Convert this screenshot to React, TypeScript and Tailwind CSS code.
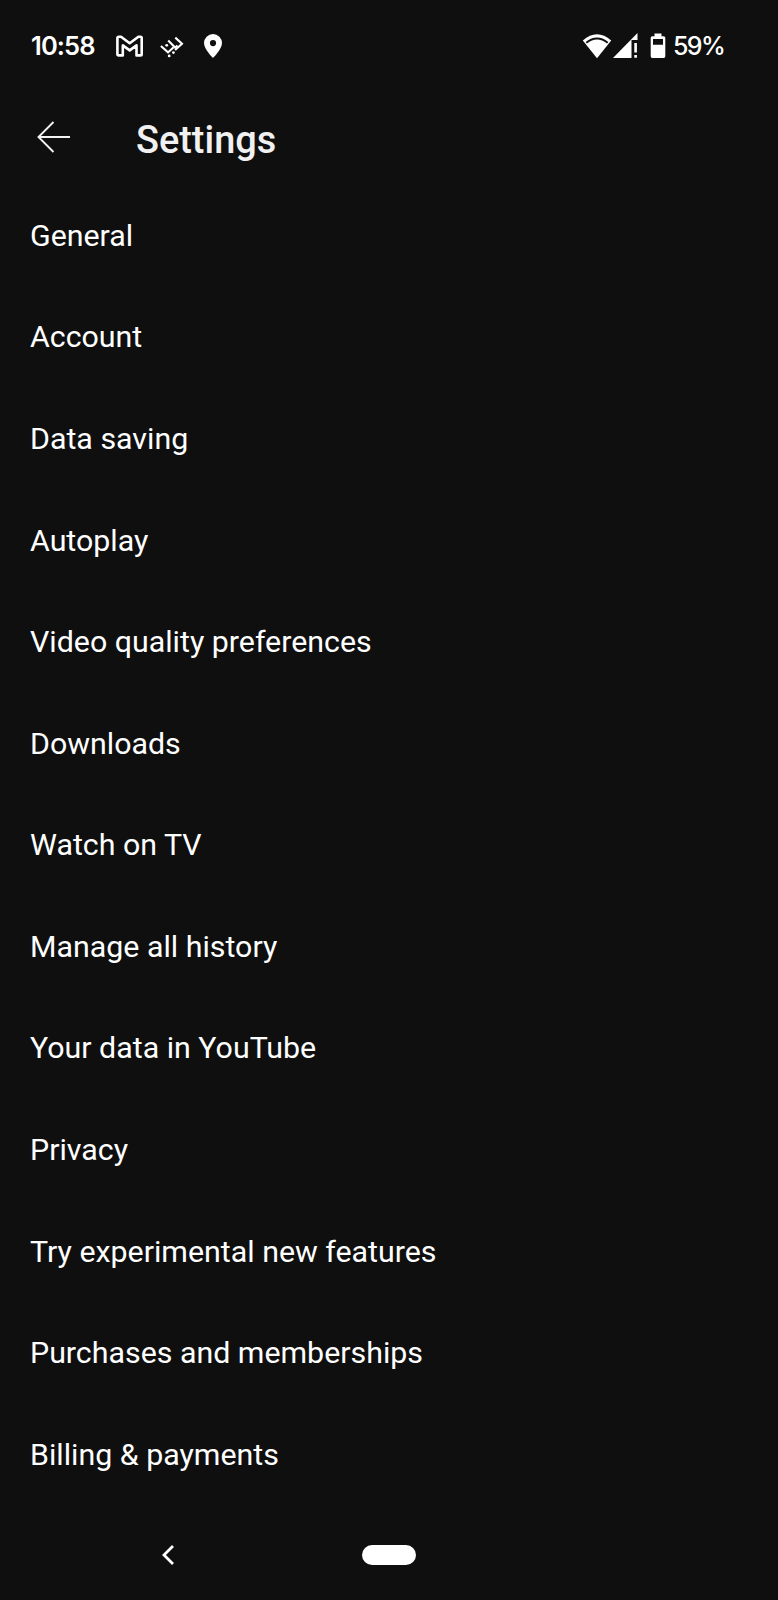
const items = [
  'General',
  'Account',
  'Data saving',
  'Autoplay',
  'Video quality preferences',
  'Downloads',
  'Watch on TV',
  'Manage all history',
  'Your data in YouTube',
  'Privacy',
  'Try experimental new features',
  'Purchases and memberships',
  'Billing & payments',
];

const MailIcon = () => (
  <svg width="28" height="24" viewBox="0 0 28 24" fill="none" stroke="currentColor" strokeWidth="2.6" strokeLinejoin="round">
    <path d="M3.8 2.8h2.2L14.7 9.2l8.7-6.4h2q1.3 0 1.3 1.4v16q0 1.2-1.2 1.2h-4V11.4l-6.8 5-6.9-5v10H3.6q-1.2 0-1.2-1.2v-16q0-1.4 1.4-1.4z" />
  </svg>
);

const ChevronsIcon = () => (
  <svg width="24" height="24" viewBox="0 0 24 24" fill="none" stroke="currentColor" strokeWidth="2.1">
    <path d="M.9 12 8 18.4l5.6-5.2" />
    <path d="m8.2 6.4 6.9 7.2 2.4-2.2" />
    <path d="M15.3 3.6 22 9.7l-6.9 6.4" />
    <g fill="currentColor" stroke="none">
      <circle cx="6.7" cy="11.3" r="1.4" />
      <circle cx="13.4" cy="18.6" r="1.4" />
      <circle cx="9.2" cy="21.9" r="1.4" />
    </g>
  </svg>
);

const PinIcon = () => (
  <svg width="18" height="24" viewBox="0 0 18 24" fill="currentColor" fillRule="evenodd">
    <path d="M9 0a9 9 0 0 0-9 9c0 6.2 9 15 9 15s9-8.8 9-15a9 9 0 0 0-9-9zm0 6a3.1 3.1 0 1 1 0 6.2A3.1 3.1 0 0 1 9 6z" />
  </svg>
);

const WifiIcon = () => (
  <svg width="30" height="26" viewBox="0 0 30 26">
    <path d="M.8 7.6Q15-5 29.2 7.6L15 25.2z" fill="currentColor" />
    <path d="M4.3 9.7Q15 1.5 25.7 9.7" fill="none" stroke="#0f0f0f" strokeWidth="1.9" />
  </svg>
);

const SignalIcon = () => (
  <svg width="25" height="26" viewBox="0 0 25 26" fill="currentColor">
    <path d="M24.5 0v7h-6v18H0z" />
    <path d="M21.3 10h2.6v9.5h-2.6zM21.3 22h2.6v2.8h-2.6z" />
  </svg>
);

const BatteryIcon = () => (
  <svg width="16" height="26" viewBox="0 0 16 26" fill="currentColor" fillRule="evenodd">
    <path d="M4.5.5h7v2.7h2.2Q15.3 3.2 15.3 4.8v18.5q0 1.7-1.6 1.7H2.3Q.7 25 .7 23.3V4.8q0-1.6 1.6-1.6h2.2zM3 6v5.8h10V6z" />
  </svg>
);

const StatusBar = () => (
  <div className="flex h-[92px] items-center pl-[31px] pr-[54px] font-['Inter',sans-serif] text-[25.5px] font-semibold">
    <span className="w-[84px] pt-px tracking-[-0.9px]">10:58</span>
    <MailIcon />
    <div className="ml-[17px]">
      <ChevronsIcon />
    </div>
    <div className="ml-[20px]">
      <PinIcon />
    </div>
    <div className="ml-auto flex items-center">
      <WifiIcon />
      <div className="ml-[1px]">
        <SignalIcon />
      </div>
      <div className="ml-[12px]">
        <BatteryIcon />
      </div>
      <span className="ml-[7px] w-[51px] whitespace-nowrap pt-[2px] text-[25px] font-medium tracking-[-1.6px]">59%</span>
    </div>
  </div>
);

export default function App() {
  return (
    <div className="flex h-[1600px] w-[778px] flex-col bg-[#0f0f0f] font-['Roboto',sans-serif] text-white">
      <StatusBar />
      <header className="flex h-[92.7px] items-center pl-[37px] text-[#f1f1f1]">
        <svg width="34" height="32" viewBox="0 0 34 32" fill="none" stroke="currentColor" strokeWidth="1.9" className="-mt-[3px]">
          <path d="M16.5 1 1.5 16l15 15M1.5 16H33" />
        </svg>
        <h1 className="ml-[65px] mt-[4px] text-[37.9px] font-medium">Settings</h1>
      </header>
      <ul className="flex-1">
        {items.map((item) => (
          <li key={item} className="flex h-[101.6px] items-center pl-[30px] text-[30.35px]">
            {item}
          </li>
        ))}
      </ul>
      <nav className="flex h-[91px] items-center pl-[162px]">
        <svg width="12" height="20" viewBox="0 0 12 20" fill="none" stroke="currentColor" strokeWidth="2.8">
          <path d="M11 1 2 10l9 9" />
        </svg>
        <div className="ml-[188px] h-[20px] w-[54px] rounded-full bg-white" />
      </nav>
    </div>
  );
}
